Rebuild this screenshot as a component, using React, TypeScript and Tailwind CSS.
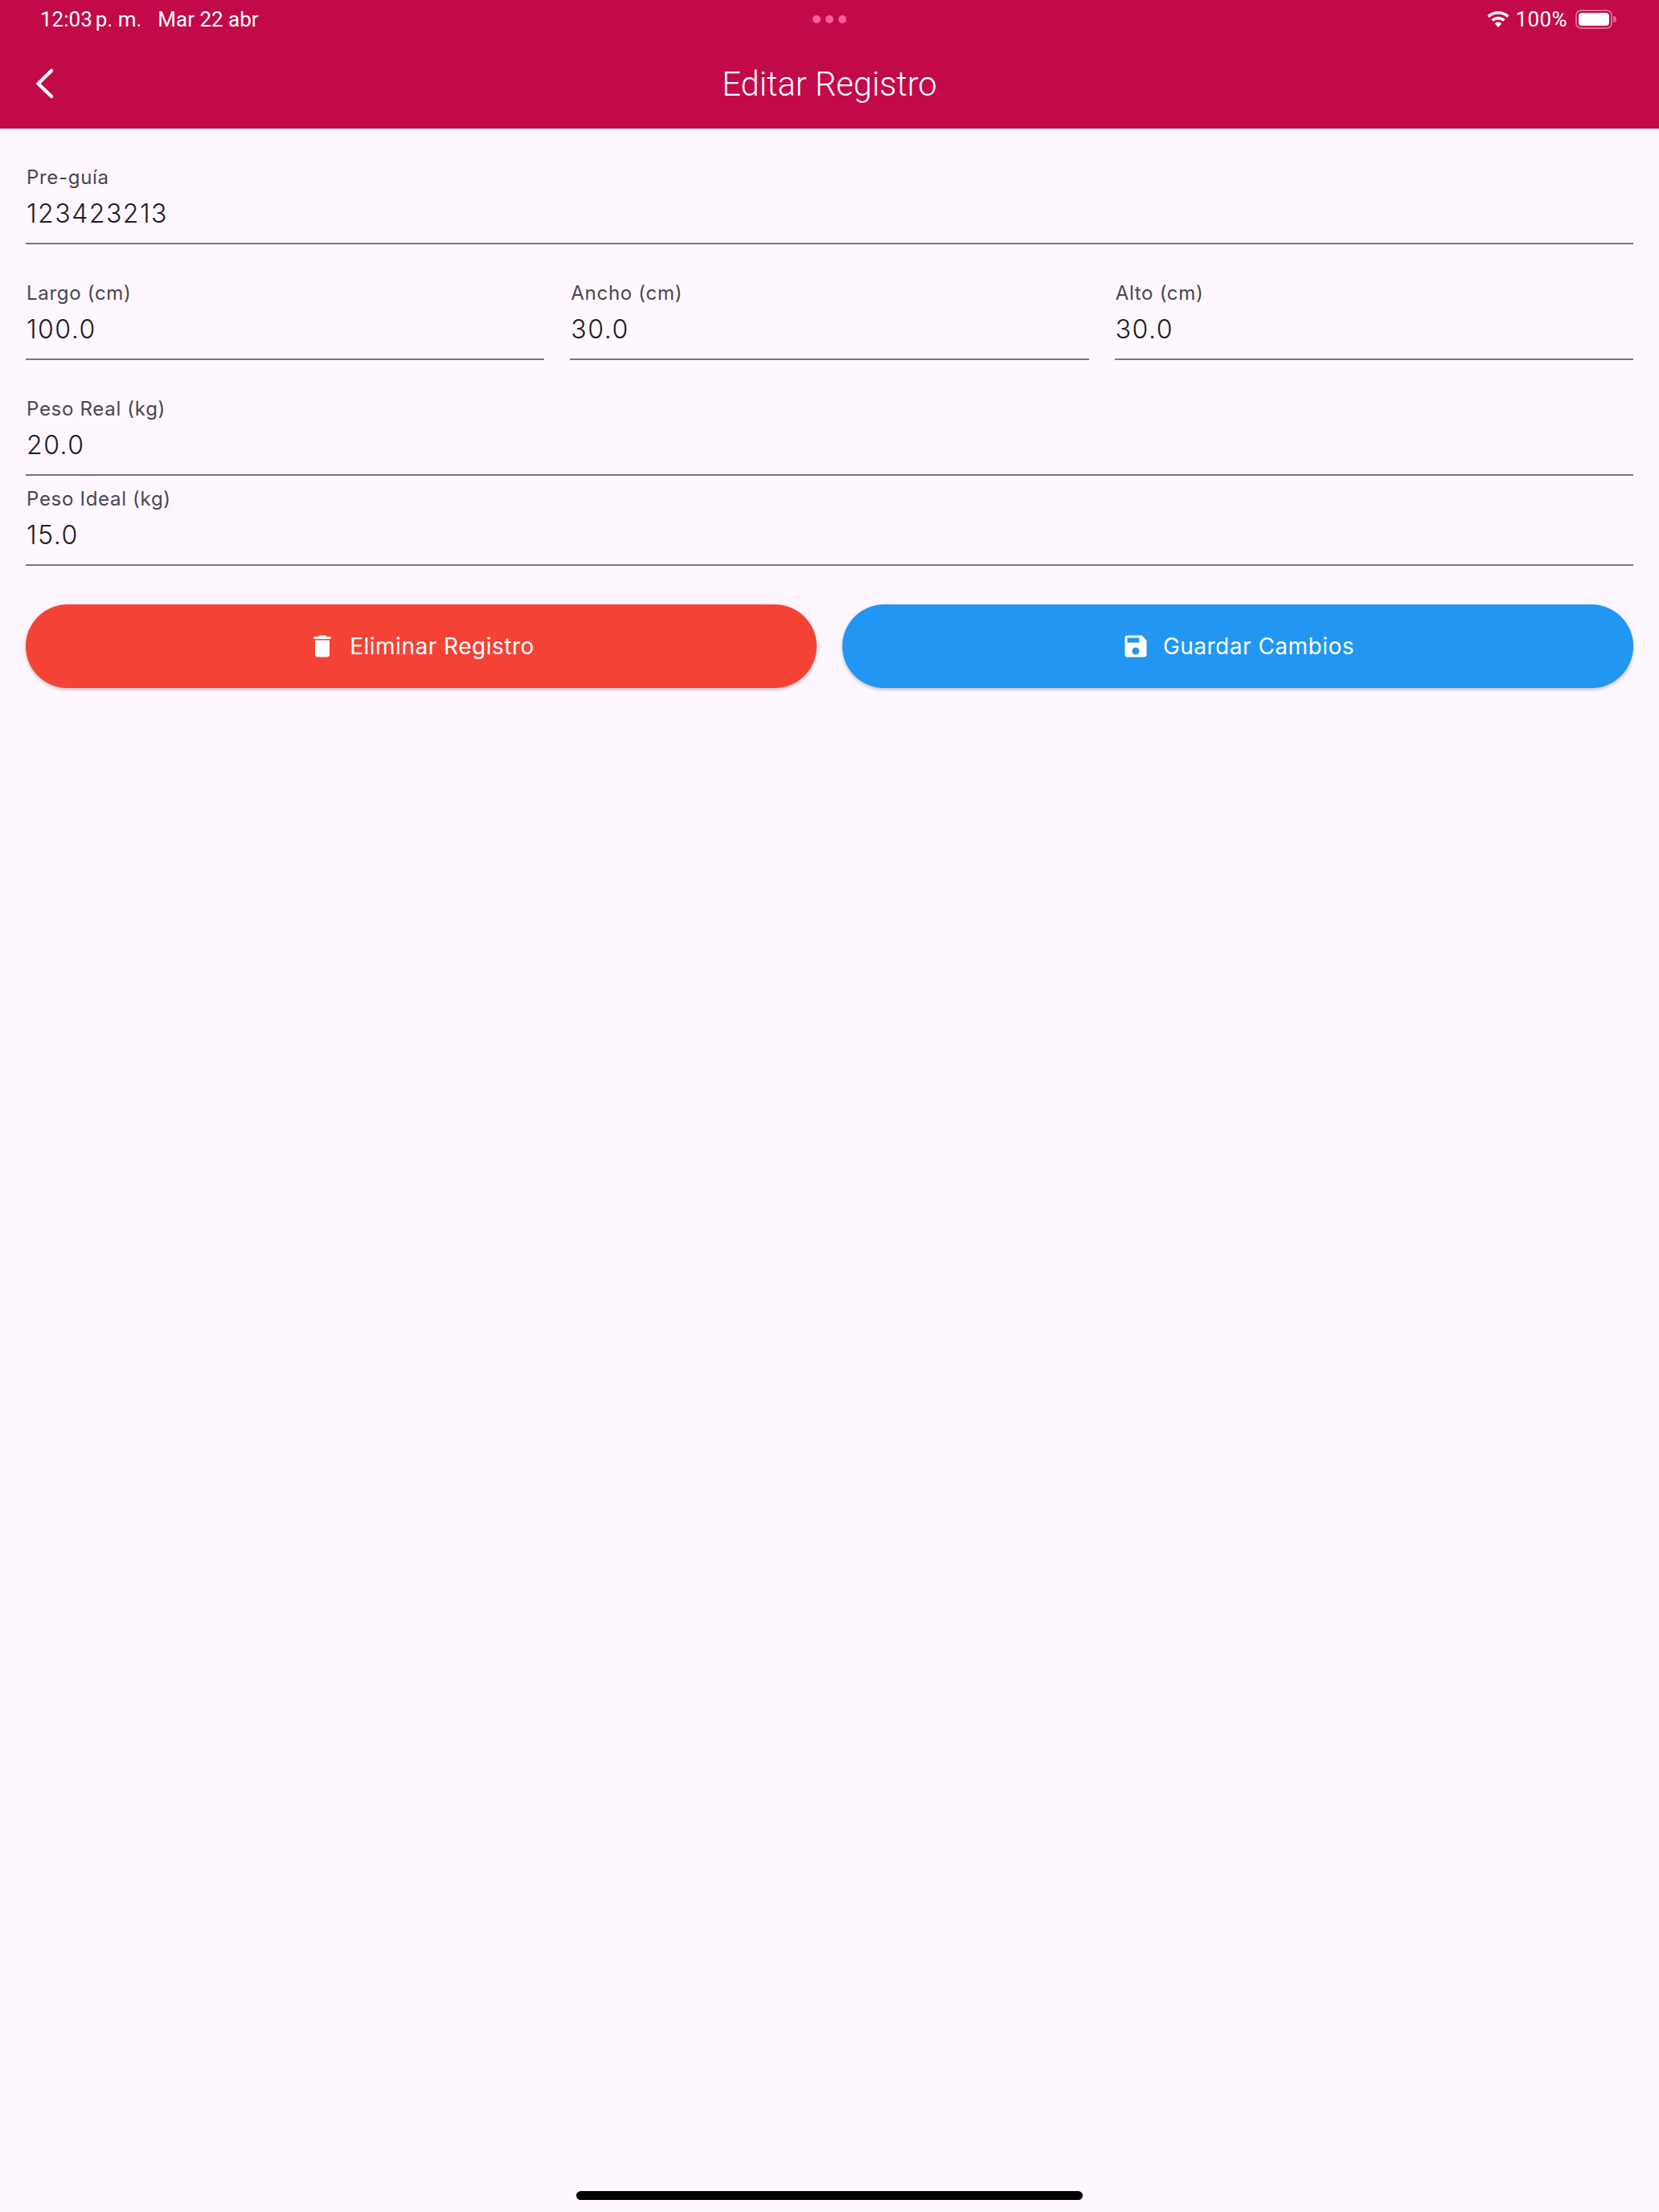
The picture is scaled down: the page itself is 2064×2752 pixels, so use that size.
function Field({ label, value }: { label: string; value: string }) {
  return (
    <div className="h-[112px] min-w-0 flex-1 border-b-2 border-[#79747e] pl-[1px]">
      <div className="h-[48px] pt-[16px] text-[24px] leading-[26px] tracking-[0.7px] text-[#49454f]">{label}</div>
      <div className="text-[32px] leading-[52px] font-[350] tracking-[1.5px] text-[#1d1b20]">{value}</div>
    </div>
  );
}

function ActionButton({ color, label, icon }: { color: string; label: string; icon: string }) {
  return (
    <button className={`flex h-[104px] flex-1 items-center justify-center gap-[16px] rounded-full text-[28px] tracking-[0.5px] text-white shadow-[0_2px_4px_rgba(0,0,0,0.25)] ${color}`}>
      <svg viewBox="0 0 24 24" className="h-[36px] w-[36px]" fill="currentColor">
        <path d={icon} />
      </svg>
      {label}
    </button>
  );
}

export default function App() {
  return (
    <div className="relative min-h-[2752px] bg-[#fef7ff] font-['Inter',sans-serif]">
      {/* App bar */}
      <header className="h-[160px] bg-[#c2094a] text-white">
        <div className="grid h-[48px] grid-cols-3 items-center pl-[50px] pr-[53px] font-['Roboto',sans-serif] text-[26px]">
          <div className="flex gap-[20px] whitespace-nowrap">
            <span>12:03<span className="ml-[4px]">p. m.</span></span>
            <span>Mar 22 abr</span>
          </div>
          <div className="flex justify-center gap-[6px] pl-[3px]">
            <span className="h-[10px] w-[10px] rounded-full bg-[#ff5f9e]" />
            <span className="h-[10px] w-[10px] rounded-full bg-[#ff5f9e]" />
            <span className="h-[10px] w-[10px] rounded-full bg-[#ff5f9e]" />
          </div>
          <div className="flex items-center justify-end">
            <svg viewBox="0 0 28 20" className="h-[20px] w-[28px]" fill="currentColor">
              <path d="M14 0C8.800 0 4.100 2 .5 5.300l2.400 2.600C5.800 5.200 9.700 3.600 14 3.600s8.200 1.600 11.100 4.300l2.400-2.600C23.900 2 19.200 0 14 0z" />
              <path d="M14 6.800c-3.300 0-6.300 1.300-8.600 3.300l2.500 2.600c1.600-1.400 3.800-2.300 6.100-2.300s4.500.9 6.100 2.300l2.500-2.600c-2.300-2-5.300-3.300-8.600-3.300z" />
              <path d="M14 13.500c-1.700 0-3.200.6-4.300 1.700L14 20l4.300-4.800c-1.100-1.100-2.600-1.700-4.300-1.700z" />
            </svg>
            <span className="ml-[8px] mr-[10px] tracking-[0.4px]">100%</span>
            <div className="flex items-center gap-[1px]">
              <div className="h-[24px] w-[46px] rounded-[7px] border-2 border-white/40 p-[2px]">
                <div className="h-full w-full rounded-[4px] bg-white" />
              </div>
              <span className="h-[8px] w-[4px] rounded-r-full bg-white/40" />
            </div>
          </div>
        </div>
        <div className="relative flex h-[112px] items-center justify-center pt-[2px] font-['Roboto',sans-serif] text-[41.6px] font-[350]">
          <svg
            viewBox="0 0 24 40"
            className="absolute left-[44px] top-[36px] h-[40px] w-[24px]"
            fill="none"
            stroke="currentColor"
            strokeWidth={4.5}
            strokeLinecap="round"
            strokeLinejoin="round"
          >
            <path d="M20 4 L3.500 20 L20 36" />
          </svg>
          Editar Registro
        </div>
      </header>

      {/* Form */}
      <main className="px-[32px] pt-[32px]">
        <Field label="Pre-guía" value="123423213" />
        <div className="mt-[32px] flex gap-[32px]">
          <Field label="Largo (cm)" value="100.0" />
          <Field label="Ancho (cm)" value="30.0" />
          <Field label="Alto (cm)" value="30.0" />
        </div>
        <div className="mt-[32px]">
          <Field label="Peso Real (kg)" value="20.0" />
          <Field label="Peso Ideal (kg)" value="15.0" />
        </div>
        <div className="mt-[48px] flex gap-[32px]">
          <ActionButton
            color="bg-[#f44336]"
            label="Eliminar Registro"
            icon="M6 19c0 1.100.9 2 2 2h8c1.100 0 2-.9 2-2V7H6v12zM19 4h-3.500l-1-1h-5l-1 1H5v2h14V4z"
          />
          <ActionButton
            color="bg-[#2196f3]"
            label="Guardar Cambios"
            icon="M17 3H5c-1.110 0-2 .9-2 2v14c0 1.100.89 2 2 2h14c1.100 0 2-.9 2-2V7l-4-4zm-5 16c-1.660 0-3-1.340-3-3s1.340-3 3-3 3 1.340 3 3-1.340 3-3 3zm3-10H5V5h10v4z"
          />
        </div>
      </main>

      {/* Home indicator */}
      <div className="absolute bottom-[15px] left-1/2 h-[11px] w-[630px] -translate-x-1/2 rounded-full bg-black" />
    </div>
  );
}
